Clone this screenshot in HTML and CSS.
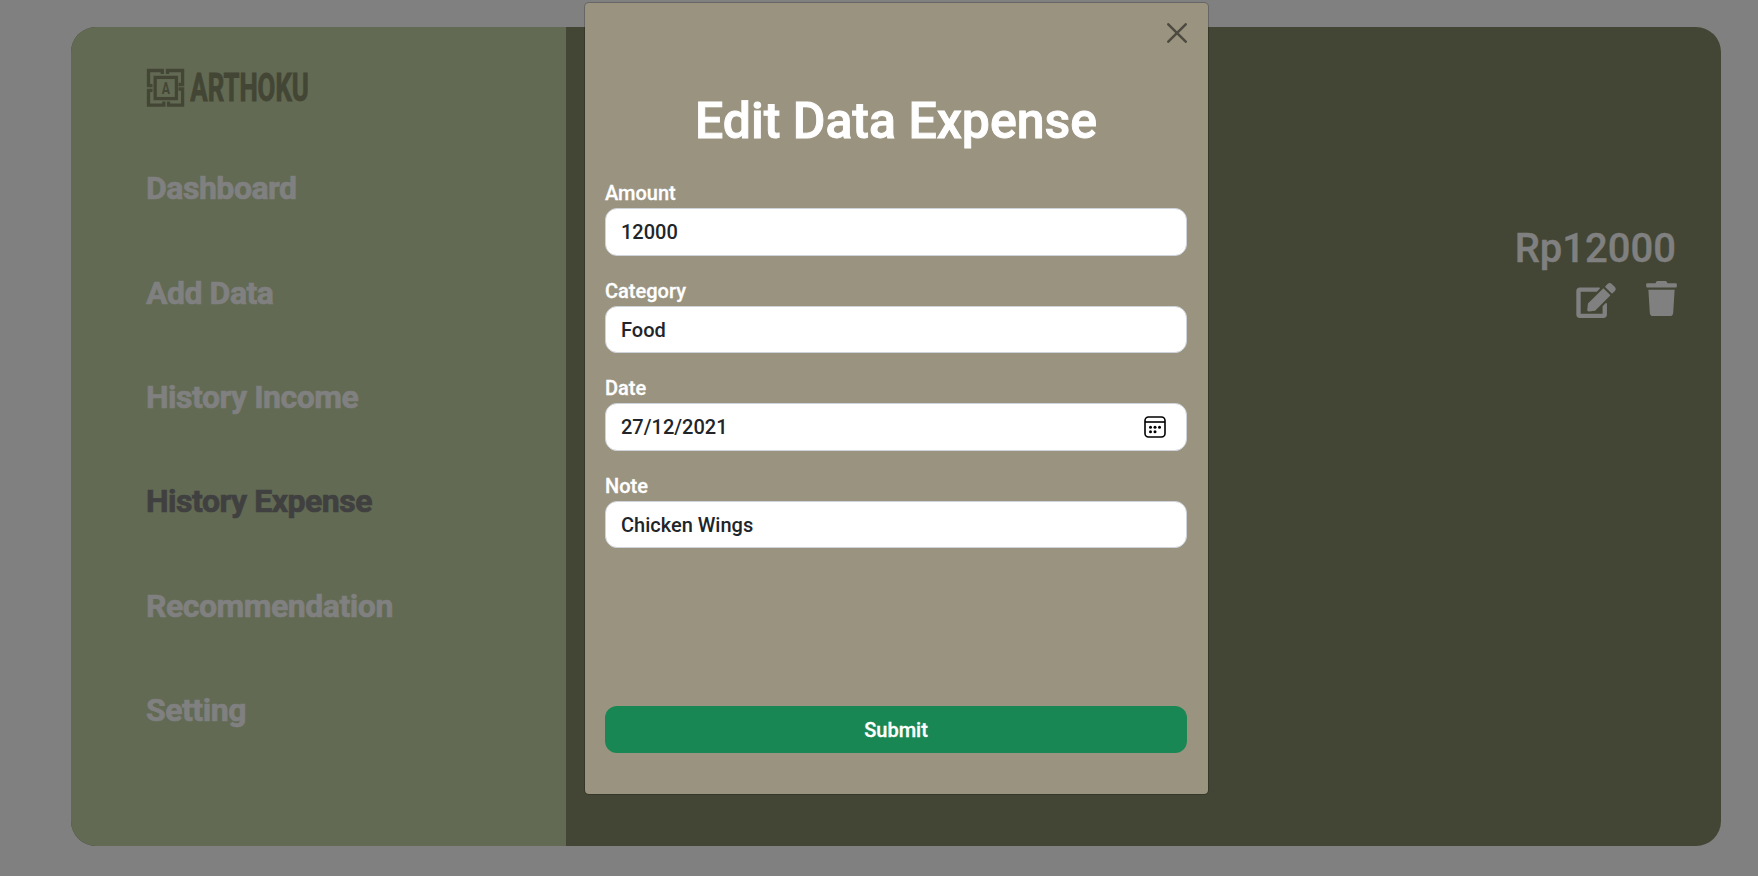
FILE: index.html
```html
<!DOCTYPE html>
<html lang="en">
<head>
<meta charset="utf-8">
<title>Arthoku</title>
<link rel="stylesheet" href="styles.css">
</head>
<body>
<div class="app">
  <aside class="sidebar">
    <svg class="logo" width="180" height="48" viewBox="142 64 180 48">
      <g class="logo-lines">
        <path d="M162.300 74V70.500H148.500V85.700H152.500M167.500 74V70.500H182.600V84.500H178.500M178.500 89H182.600V105.100H168.500V101.500M163.800 101.500V105.100H148.500V90.300H152.500"/>
        <rect x="155.200" y="77.400" width="21.200" height="21.200"/>
      </g>
      <text class="logo-a" x="161.700" y="94" textLength="8.200" lengthAdjust="spacingAndGlyphs">A</text>
      <text class="logo-name" x="190.300" y="101.300" textLength="118.500" lengthAdjust="spacingAndGlyphs">ARTHOKU</text>
    </svg>
    <nav class="nav">
      <a>Dashboard</a>
      <a>Add Data</a>
      <a>History Income</a>
      <a class="active">History Expense</a>
      <a>Recommendation</a>
      <a>Setting</a>
    </nav>
  </aside>
  <main class="main">
    <div class="amount">Rp12000</div>
    <div class="actions">
      <svg width="40" height="35" viewBox="0 0 576 512"><path d="M402.600 83.200l90.200 90.200c3.800 3.800 3.800 10 0 13.800L274.400 405.600l-92.800 10.300c-12.400 1.400-22.900-9.100-21.500-21.500l10.300-92.800L388.800 83.200c3.800-3.800 10-3.800 13.800 0zm162-22.900l-48.800-48.800c-15.200-15.200-39.900-15.200-55.200 0l-35.400 35.400c-3.800 3.800-3.800 10 0 13.800l90.200 90.200c3.800 3.800 10 3.800 13.800 0l35.400-35.400c15.200-15.300 15.200-40 0-55.200zM384 346.200V448H64V128h229.800c3.200 0 6.200-1.300 8.500-3.500l40-40c7.600-7.600 2.200-20.500-8.500-20.500H48C21.500 64 0 85.500 0 112v352c0 26.500 21.500 48 48 48h352c26.500 0 48-21.500 48-48V306.200c0-10.700-12.900-16-20.500-8.500l-40 40c-2.200 2.300-3.500 5.300-3.500 8.500z"/></svg>
      <svg class="trash" width="31" height="35" viewBox="0 0 448 512"><path d="M432 32H312l-9.400-18.700A24 24 0 0 0 281.100 0H166.800a23.700 23.700 0 0 0-21.400 13.300L136 32H16A16 16 0 0 0 0 48v32a16 16 0 0 0 16 16h416a16 16 0 0 0 16-16V48a16 16 0 0 0-16-16zM53.200 467a48 48 0 0 0 47.900 45h245.800a48 48 0 0 0 47.900-45L416 128H32z"/></svg>
    </div>
  </main>
</div>
<div class="modal">
  <button class="close" aria-label="Close"><svg width="20" height="20" viewBox="0 0 20 20"><path d="M1.300 1.300l17.400 17.400M18.700 1.300l-17.400 17.400"/></svg></button>
  <h1 class="title">Edit Data Expense</h1>
  <form class="form">
    <div class="field"><div class="label">Amount</div><div class="input">12000</div></div>
    <div class="field"><div class="label">Category</div><div class="input">Food</div></div>
    <div class="field"><div class="label">Date</div><div class="input">27/12/2021
      <svg width="22" height="22" viewBox="0 0 22 22"><rect class="cal-line" x="1" y="1" width="20" height="20" rx="3.500"/><path class="cal-line" d="M1 6h20"/><g><circle cx="6.500" cy="11.200" r="1.500"/><circle cx="11" cy="11.200" r="1.500"/><circle cx="15.500" cy="11.200" r="1.500"/><circle cx="6.500" cy="15.700" r="1.500"/><circle cx="11" cy="15.700" r="1.500"/></g></svg></div></div>
    <div class="field"><div class="label">Note</div><div class="input">Chicken Wings</div></div>
    <button class="submit" type="button">Submit</button>
  </form>
</div>
</body>
</html>
```

FILE: styles.css
```css
* { box-sizing: border-box; }
body {
  margin: 0;
  height: 876px;
  overflow: hidden;
  background: #808080;
  font-family: Roboto, sans-serif;
  font-weight: 500;
}
.app {
  display: flex;
  width: 1650px;
  height: 819px;
  margin: 27px 0 0 71px;
  float: left;
  border-radius: 25px;
  overflow: hidden;
  background: #434634;
}
.sidebar {
  width: 495px;
  padding: 37px 0 0 71px;
  background: #626a53;
}
.logo { display: block; overflow: visible; }
.logo-lines { fill: none; stroke: #434634; stroke-width: 3.3; }
.logo-a { font-size: 16px; font-weight: 700; fill: #434634; }
.logo-name { font-size: 38px; font-weight: 700; fill: #434634; stroke: #434634; stroke-width: .9; }
.nav {
  display: flex;
  flex-direction: column;
  padding: 52.400px 0 0 4px;
}
.nav a {
  height: 104.350px;
  line-height: 48px;
  font-size: 32px;
  font-weight: 700;
  letter-spacing: -0.480px;
  color: #808080;
  -webkit-text-stroke: .7px currentColor;
}
.nav a.active { color: #404040; }
.main { flex: 1; padding: 192px 45px 0 0; color: #808080; }
.amount { font-size: 40px; line-height: 60px; text-align: right; -webkit-text-stroke: .4px currentColor; }
.actions { display: flex; justify-content: flex-end; gap: 30px; padding-top: 4px; margin-right: -1px; }
.actions svg { fill: #808080; }
.actions .trash { margin-top: -2px; }
.modal {
  position: absolute;
  left: 584px;
  top: 2px;
  width: 625px;
  height: 793px;
  padding: 0 21px 0 20px;
  border: 1px solid rgba(0, 0, 0, .2);
  border-radius: 5px;
  background: #9a9380;
  background-clip: padding-box;
  color: #fff;
}
.close {
  display: block;
  margin: 20px 0 0 auto;
  padding: 0;
  border: 0;
  background: none;
  height: 20px;
}
.close svg { display: block; fill: none; stroke: #4d4a40; stroke-width: 2.500; stroke-linecap: round; }
.title {
  margin: 48px 0 0;
  font-size: 50px;
  line-height: 60px;
  font-weight: 500;
  text-align: center;
  -webkit-text-stroke: .9px currentColor;
}
.form { padding-top: 27px; }
.field { height: 97.600px; }
.label { font-size: 20px; line-height: 30px; -webkit-text-stroke: .3px currentColor; }
.input {
  display: flex;
  align-items: center;
  justify-content: space-between;
  height: 47.500px;
  padding: 1px 20px 0 15px;
  border: 1px solid #ced4da;
  border-radius: 12px;
  background: #fff;
  color: #212529;
  font-size: 20px;
}
.input svg { fill: #000; }
.cal-line { fill: none; stroke: #000; stroke-width: 1.600; }
.submit {
  display: block;
  width: 100%;
  height: 47px;
  margin-top: 138px;
  border: 0;
  border-radius: 12px;
  background: #198754;
  color: #fff;
  font: 500 20px Roboto, sans-serif;
  -webkit-text-stroke: .3px currentColor;
}
```
